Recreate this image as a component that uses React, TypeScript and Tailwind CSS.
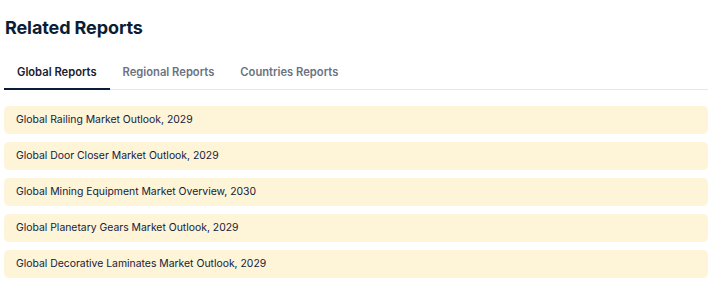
import React, { useState } from 'react';

const tabs = ['Global Reports', 'Regional Reports', 'Countries Reports'];

const reports = [
  'Global Railing Market Outlook, 2029',
  'Global Door Closer Market Outlook, 2029',
  'Global Mining Equipment Market Overview, 2030',
  'Global Planetary Gears Market Outlook, 2029',
  'Global Decorative Laminates Market Outlook, 2029',
];

const App: React.FC = () => {
  const [active, setActive] = useState(0);

  return (
    <div className="w-[715px] h-[285px] bg-white font-['Inter',sans-serif] pl-[4px] pr-[7px] pt-[16px]">
      <h2 className="ml-[1px] text-[18px] leading-[24px] font-bold text-[#0b1d36] tracking-[-0.1px]">Related Reports</h2>

      {/* Tabs */}
      <div className="mt-[19px] flex border-b border-[#e5e7eb]">
        {tabs.map((t, i) => (
          <button
            key={t}
            onClick={() => setActive(i)}
            className={`px-[13px] pt-[5px] pb-[8px] text-[11.2px] leading-[16px] font-semibold -mb-px border-b-2 ${
              active === i ? 'text-[#1a202c] border-[#0b1d36]' : 'text-[#6b7280] border-transparent'
            }`}
          >
            {t}
          </button>
        ))}
      </div>

      {/* Report list */}
      <div className="mt-[16px] flex flex-col gap-[8px]">
        {reports.map((r) => (
          <a
            key={r}
            href="#"
            className="block h-[28px] rounded-[5px] bg-[#fef4d8] pl-[12px] text-[10.4px] leading-[28px] text-[#14223a]"
          >
            {r}
          </a>
        ))}
      </div>
    </div>
  );
};

export default App;
